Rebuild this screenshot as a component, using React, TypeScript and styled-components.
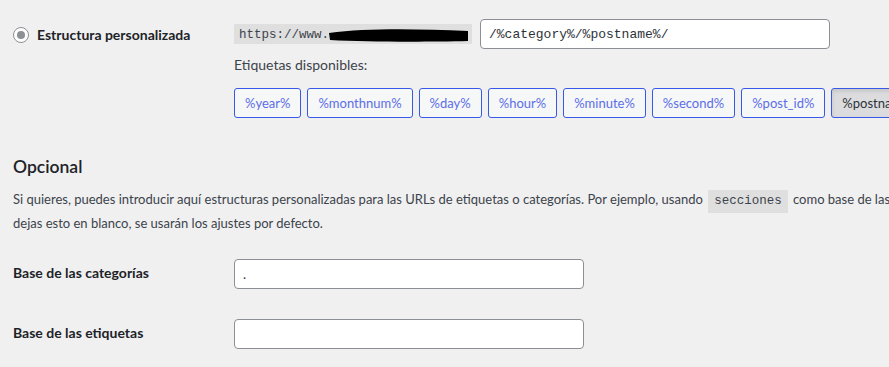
import React from 'react';
import styled, { createGlobalStyle } from 'styled-components';

const GlobalStyle = createGlobalStyle`
  html, body {
    margin: 0;
    padding: 0;
    background: #f0f0f1;
  }
  body {
    font-family: Lato, "Noto Sans", "Liberation Sans", sans-serif;
    font-size: 14px;
    color: #3c434a;
    overflow: hidden;
  }
`;

const Page = styled.div`
  padding: 19px 0 0 13px;
  width: 1100px;
`;

const Row = styled.div<{ $top?: number }>`
  display: flex;
  align-items: flex-start;
  margin-top: ${p => p.$top ?? 0}px;
`;

const Th = styled.div<{ $pad?: number }>`
  width: 221px;
  flex: none;
  padding-top: ${p => p.$pad ?? 0}px;
  font-weight: 700;
  color: #1d2327;
  font-size: 14px;
`;

const RadioLabel = styled.label`
  display: flex;
  align-items: center;
  gap: 8px;
`;

const Radio = styled.span`
  width: 16px;
  height: 16px;
  box-sizing: border-box;
  border-radius: 50%;
  border: 1px solid #8c8f94;
  background: #fff;
  display: flex;
  align-items: center;
  justify-content: center;
  &::before {
    content: '';
    width: 8px;
    height: 8px;
    border-radius: 50%;
    background: #8c8f94;
  }
`;

const Td = styled.div`
  display: flex;
  flex-direction: column;
`;

const Inline = styled.div`
  display: flex;
  align-items: center;
  gap: 8px;
`;

const Code = styled.code`
  font-family: Consolas, "Liberation Mono", monospace;
  font-size: 12.5px;
  background: rgba(0, 0, 0, 0.07);
  color: #3c434a;
  padding: 3px 5px 2px;
  display: inline-flex;
  align-items: center;
  position: relative;
`;

const UrlCode = styled(Code)`
  width: 228px;
  height: 15px;
`;

const Redact = styled.svg`
  position: absolute;
  left: 93px;
  top: 0;
`;

const TextInput = styled.input<{ $w: number; $mono?: boolean }>`
  width: ${p => p.$w}px;
  height: 30px;
  box-sizing: border-box;
  border: 1px solid #8c8f94;
  border-radius: 4px;
  background: #fff;
  padding: 0 8px;
  font-family: ${p => (p.$mono ? 'Consolas, "Liberation Mono", monospace' : 'inherit')};
  font-size: 13px;
  color: #2c3338;
  outline: none;
`;

const Hint = styled.div`
  margin-top: 7px;
  color: #3c434a;
`;

const Tags = styled.div`
  display: flex;
  gap: 6px;
  margin-top: 15px;
`;

const TagButton = styled.button<{ $active?: boolean }>`
  flex: none;
  height: 30px;
  padding: 0 10px;
  border: 1px solid #3858e9;
  border-radius: 3px;
  background: ${p => (p.$active ? '#dcdcde' : '#f6f7f7')};
  color: ${p => (p.$active ? '#2c3338' : '#5b6ee8')};
  font-family: inherit;
  font-size: 13px;
  box-shadow: ${p => (p.$active ? 'inset 0 2px 4px rgba(0,0,0,.12)' : 'none')};
`;

const Heading = styled.h2`
  margin: 38px 0 0;
  font-size: 17.5px;
  font-weight: 600;
  color: #1d2327;
`;

const Para = styled.p`
  margin: 12px 0 0;
  font-size: 13px;
  line-height: 20px;
  white-space: nowrap;
  color: #3c434a;
`;

const InlineCode = styled(Code)`
  padding: 1px 6px 2px;
  margin: 0 2px;
`;

const tags = ['%year%', '%monthnum%', '%day%', '%hour%', '%minute%', '%second%', '%post_id%', '%postname%'];

export default function App() {
  return (
    <>
      <GlobalStyle />
      <Page>
        <Row>
          <Th $pad={7}>
            <RadioLabel>
              <Radio />
              Estructura personalizada
            </RadioLabel>
          </Th>
          <Td>
            <Inline>
              <UrlCode>
                https://www.
                <Redact width="143" height="20" viewBox="0 0 143 20">
                  <path d="M2 9 C40 4, 90 5, 141 7 L141 17 C100 18, 40 18, 3 16 Z" fill="#000" />
                </Redact>
              </UrlCode>
              <TextInput $w={350} $mono defaultValue="/%category%/%postname%/" />
            </Inline>
            <Hint>Etiquetas disponibles:</Hint>
            <Tags>
              {tags.map(t => (
                <TagButton key={t} $active={t === '%postname%'}>{t}</TagButton>
              ))}
            </Tags>
          </Td>
        </Row>

        <Heading>Opcional</Heading>
        <Para>
          Si quieres, puedes introducir aquí estructuras personalizadas para las URLs de etiquetas o categorías. Por ejemplo, usando <InlineCode>secciones</InlineCode> como base de las categorías, harías que los enlaces fuesen así.
          <br />
          dejas esto en blanco, se usarán los ajustes por defecto.
        </Para>

        <Row $top={26}>
          <Th $pad={5}>Base de las categorías</Th>
          <TextInput $w={350} defaultValue="." />
        </Row>
        <Row $top={30}>
          <Th $pad={5}>Base de las etiquetas</Th>
          <TextInput $w={350} />
        </Row>
      </Page>
    </>
  );
}
